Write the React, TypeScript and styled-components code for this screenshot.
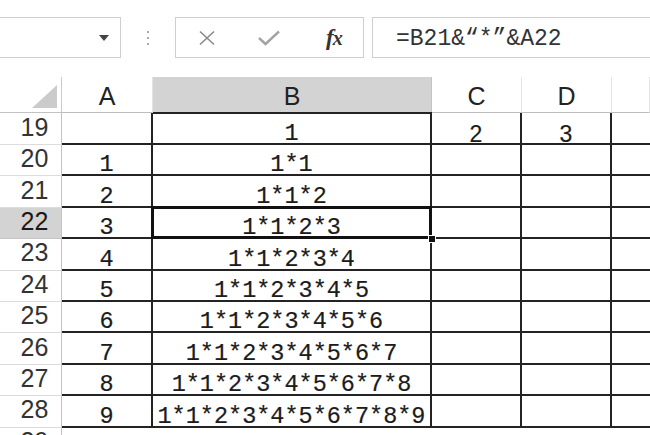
import styled, { createGlobalStyle } from "styled-components";

const GlobalStyle = createGlobalStyle`
  html, body {
    margin: 0;
    padding: 0;
    background: #fff;
    overflow: hidden;
  }
  body {
    font-family: "Liberation Sans", Arial, sans-serif;
    width: 650px;
    height: 435px;
  }
`;

const Page = styled.div`
  width: 650px;
  height: 435px;
  overflow: hidden;
`;

const Toolbar = styled.div`
  display: flex;
  align-items: center;
  height: 77px;
  padding: 17px 0 19px;
  box-sizing: border-box;
`;

const NameBox = styled.div`
  flex: 0 0 123px;
  height: 41px;
  margin-left: -2px;
  box-sizing: border-box;
  border: 1px solid #cfcfcf;
  display: flex;
  align-items: center;
  justify-content: flex-end;
  padding-right: 11px;
`;

const Arrow = styled.span`
  width: 0;
  height: 0;
  border-left: 5px solid transparent;
  border-right: 5px solid transparent;
  border-top: 6px solid #444;
`;

const Separator = styled.div`
  flex: 0 0 54px;
  display: flex;
  flex-direction: column;
  align-items: center;
  gap: 4px;
`;

const Dot = styled.span`
  width: 2px;
  height: 2px;
  background: #8c8c8c;
  border-radius: 1px;
`;

const ButtonBox = styled.div`
  flex: 0 0 189px;
  height: 41px;
  box-sizing: border-box;
  border: 1px solid #cfcfcf;
  display: flex;
  align-items: center;
`;

const ToolButton = styled.div`
  flex: 1;
  display: flex;
  align-items: center;
  justify-content: center;
  height: 100%;
`;

const Fx = styled.span`
  font-family: "Liberation Serif", "Times New Roman", serif;
  font-style: italic;
  font-weight: bold;
  font-size: 23px;
  color: #333;
  letter-spacing: -1px;
  padding-left: 4px;

  small {
    font-size: 20px;
  }
`;

const FormulaBox = styled.div`
  flex: 1;
  height: 41px;
  margin-left: 8px;
  margin-right: -10px;
  box-sizing: border-box;
  border: 1px solid #cfcfcf;
  display: flex;
  align-items: center;
  padding: 2px 0 0 23px;
  font-family: "Liberation Mono", "Courier New", monospace;
  font-size: 23px;
  color: #333;
  white-space: pre;
`;

const Grid = styled.div`
  display: grid;
  grid-template-columns: 62px 91px 279px 90px 90px 1fr;
  grid-template-rows: 36px 32px repeat(10, 31.4px);
`;

const Corner = styled.div`
  border-right: 1px solid #c9c9c9;
  border-bottom: 1px solid #c2c2c2;
  display: flex;
  align-items: flex-end;
  justify-content: flex-end;
  padding: 0 4px 4px 0;
`;

const Triangle = styled.span`
  width: 0;
  height: 0;
  border-left: 25px solid transparent;
  border-bottom: 23px solid #cbcbcb;
`;

const ColHead = styled.div<{ $active?: boolean }>`
  display: flex;
  align-items: center;
  justify-content: center;
  padding-top: 4px;
  box-sizing: border-box;
  background: ${(p) => (p.$active ? "#d3d3d3" : "#fff")};
  border-right: 1px solid ${(p) => (p.$active ? "#c4c4c4" : "#e4e4e4")};
  border-bottom: 1px solid #bdbdbd;
  font-size: 25px;
  color: #222;
`;

const RowHead = styled.div<{ $active?: boolean }>`
  display: flex;
  align-items: center;
  justify-content: center;
  padding: 0 0 3px 8px;
  box-sizing: border-box;
  background: ${(p) => (p.$active ? "#d3d3d3" : "#fff")};
  border-right: 1px solid #c4c4c4;
  border-bottom: 1px solid ${(p) => (p.$active ? "#c4c4c4" : "#dcdcdc")};
  font-size: 25px;
  color: ${(p) => (p.$active ? "#1a1a1a" : "#333")};
`;

const Cell = styled.div<{
  $sans?: boolean;
  $top?: boolean;
  $edge?: boolean;
  $selected?: boolean;
  $blank?: boolean;
}>`
  position: relative;
  display: flex;
  align-items: flex-end;
  justify-content: center;
  box-sizing: border-box;
  border-bottom: ${(p) => (p.$blank ? "none" : "2px solid #232323")};
  border-right: ${(p) => (p.$edge || p.$blank ? "none" : "2px solid #232323")};
  border-top: ${(p) => (p.$top ? "2px solid #232323" : "none")};
  margin-top: ${(p) => (p.$top ? "-1px" : "0")};
  font-family: ${(p) =>
    p.$sans ? '"Liberation Sans", Arial, sans-serif' : '"Liberation Mono", "Courier New", monospace'};
  font-size: ${(p) => (p.$sans ? "23px" : "23.5px")};
  line-height: 18px;
  color: #1c1c1c;
  white-space: nowrap;
  -webkit-text-stroke: 0.2px #1c1c1c;

  ${(p) =>
    p.$selected &&
    `
    &::after {
      content: "";
      position: absolute;
      left: -2px;
      top: -2px;
      right: -2px;
      bottom: -2px;
      border: 3px solid #111;
      box-sizing: border-box;
    }
    &::before {
      content: "";
      position: absolute;
      right: -6px;
      bottom: -6px;
      width: 6px;
      height: 6px;
      background: #111;
      border: 1px solid #fff;
      z-index: 2;
    }
  `}
`;

const columns = ["A", "B", "C", "D"];

type RowData = { n: number; a: string; b: string; c: string; d: string };

const rows: RowData[] = [
  { n: 19, a: "", b: "1", c: "2", d: "3" },
  ...Array.from({ length: 9 }, (_, i) => {
    const k = i + 1;
    const parts = ["1"];
    for (let j = 1; j <= k; j++) parts.push(String(j));
    return { n: 20 + i, a: String(k), b: parts.join("*"), c: "", d: "" };
  }),
];

function CrossIcon() {
  return (
    <svg width="18" height="16" viewBox="0 0 18 16">
      <path d="M2 1.5 L16 14.5 M16 1.5 L2 14.5" stroke="#8a8a8a" strokeWidth="1.6" fill="none" />
    </svg>
  );
}

function CheckIcon() {
  return (
    <svg width="24" height="16" viewBox="0 0 24 16">
      <path d="M2 8 L8.5 14 L22 1.5" stroke="#a3a3a3" strokeWidth="2.4" fill="none" />
    </svg>
  );
}

export default function App() {
  return (
    <Page>
      <GlobalStyle />
      <Toolbar>
        <NameBox>
          <Arrow />
        </NameBox>
        <Separator>
          <Dot />
          <Dot />
          <Dot />
        </Separator>
        <ButtonBox>
          <ToolButton>
            <CrossIcon />
          </ToolButton>
          <ToolButton>
            <CheckIcon />
          </ToolButton>
          <ToolButton>
            <Fx>
              f<small>x</small>
            </Fx>
          </ToolButton>
        </ButtonBox>
        <FormulaBox>=B21&“*”&A22</FormulaBox>
      </Toolbar>

      <Grid>
        <Corner>
          <Triangle />
        </Corner>
        {columns.map((c) => (
          <ColHead key={c} $active={c === "B"}>
            {c}
          </ColHead>
        ))}
        <ColHead />

        {rows.map((r) => (
          <RowPart key={r.n} row={r} />
        ))}

        <RowHead>29</RowHead>
        <Cell $blank />
        <Cell $blank />
        <Cell $blank />
        <Cell $blank />
        <Cell $blank />
      </Grid>
    </Page>
  );
}

function RowPart({ row }: { row: RowData }) {
  const first = row.n === 19;
  return (
    <>
      <RowHead $active={row.n === 22}>{row.n}</RowHead>
      <Cell>{row.a}</Cell>
      <Cell $top={first} $selected={row.n === 22}>
        {row.b}
      </Cell>
      <Cell $sans>{row.c}</Cell>
      <Cell $sans>{row.d}</Cell>
      <Cell $edge />
    </>
  );
}
